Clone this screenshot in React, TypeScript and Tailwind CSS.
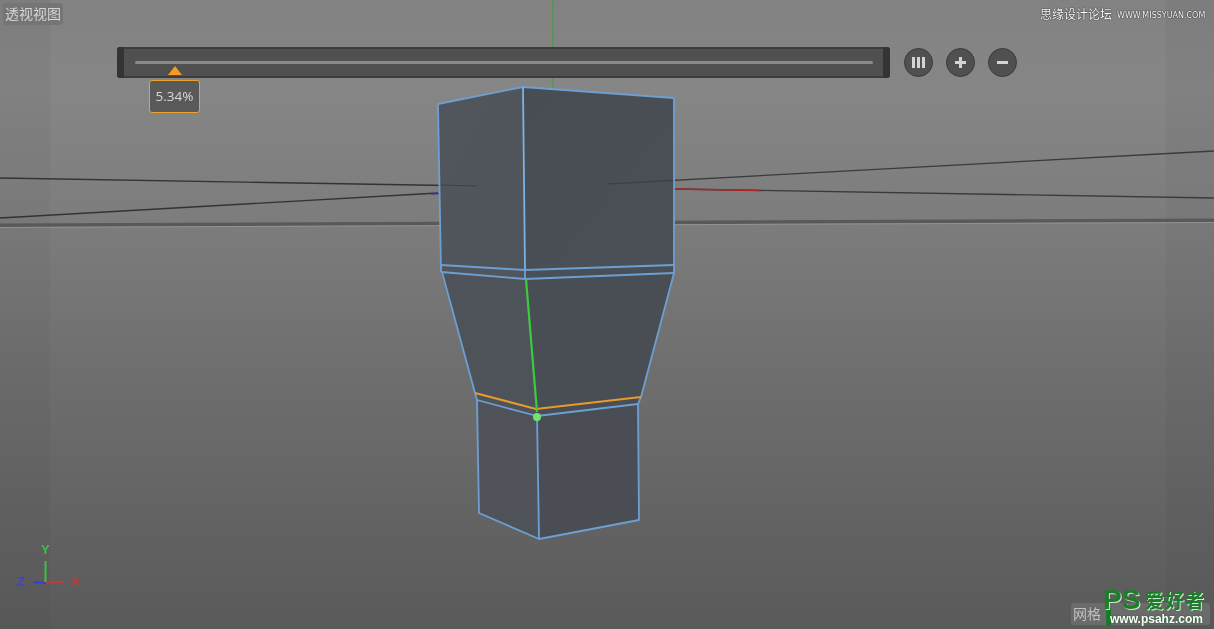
export default function App() {
  const edge = "#6d9fd2";
  return (
    <div className="relative w-[1214px] h-[629px] overflow-hidden blur-[0.5px] bg-[linear-gradient(180deg,#828282_0%,#868686_14%,#7c7c7c_36%,#6f6f6f_58%,#5a5a5a_100%)] font-['Liberation_Sans','Noto_Sans_CJK_SC',sans-serif]">
      {/* side shading */}
      <div className="absolute left-0 top-0 bottom-0 w-[50px] bg-black/[0.03]" />
      <div className="absolute right-0 top-0 bottom-0 w-[48px] bg-black/[0.03]" />

      <svg className="absolute inset-0" width="1214" height="629" viewBox="0 0 1214 629">
        <defs>
          <linearGradient id="lf" x1="0" y1="0" x2="1" y2="1">
            <stop offset="0" stopColor="#50565c" />
            <stop offset="1" stopColor="#4f555b" />
          </linearGradient>
          <linearGradient id="rf" x1="0" y1="0" x2="1" y2="1">
            <stop offset="0" stopColor="#484d54" />
            <stop offset="1" stopColor="#4b5056" />
          </linearGradient>
        </defs>
        {/* horizon */}
        <polygon points="0,223.5 1214,218.5 1214,222 0,227" fill="#595959" />
        <line x1="0" y1="227.5" x2="1214" y2="222.5" stroke="#929292" strokeWidth="1" />
        {/* grid lines */}
        <line x1="553" y1="0" x2="553" y2="88" stroke="#4f9a52" strokeWidth="1.6" />
        <line x1="0" y1="178" x2="477" y2="186" stroke="#333333" strokeWidth="1.3" />
        <line x1="0" y1="218" x2="438" y2="193" stroke="#333333" strokeWidth="1.3" />
        <line x1="431" y1="194" x2="439" y2="193.6" stroke="#3232b8" strokeWidth="1.3" />
        <line x1="607" y1="184" x2="1214" y2="151" stroke="#3a3a3a" strokeWidth="1.3" />
        <line x1="675" y1="189" x2="1214" y2="198" stroke="#3a3a3a" strokeWidth="1.3" />
        <line x1="675" y1="189" x2="760" y2="190.5" stroke="#b02424" strokeWidth="1.3" />

        {/* model faces */}
        <polygon points="438,104 523,87 525,270 441,265" fill="url(#lf)" />
        <polygon points="523,87 674,98 674,265 525,270" fill="url(#rf)" />
        <polygon points="441,265 525,270 525,279 441,272" fill="#50565c" />
        <polygon points="525,270 674,265 674,273 525,279" fill="#4a4f55" />
        <polygon points="441,272 525,279 536,409 475,393" fill="#4e5359" />
        <polygon points="525,279 674,273 641,397 536,409" fill="#494e54" />
        <polygon points="475,393 536,409 537,416 477,400" fill="#4e5359" />
        <polygon points="536,409 641,397 638,404 537,416" fill="#494e54" />
        <polygon points="477,400 537,416 539,539 479,513" fill="#4f5359" />
        <polygon points="537,416 638,404 639,520 539,539" fill="#4a4e54" />
        {/* lines seen through the model */}
        <line x1="440" y1="185" x2="477" y2="186" stroke="#3f4347" strokeWidth="1.2" />
        <line x1="607" y1="184" x2="674" y2="180.4" stroke="#3c3f43" strokeWidth="1.2" />

        {/* edges */}
        <g fill="none" stroke={edge} strokeWidth="1.8" strokeLinejoin="round">
          <polyline points="441,272 438,104 523,87 674,98 674,273" />
          <line x1="523" y1="87" x2="525" y2="270" stroke="#7ab2e6" />
          <polyline points="441,265 525,270 674,265" />
          <polyline points="441,272 525,279 674,273" />
          <line x1="525" y1="270" x2="525" y2="279" />
          <line x1="441" y1="265" x2="441" y2="272" />
          <line x1="442" y1="272" x2="475" y2="393" />
          <line x1="674" y1="273" x2="641" y2="397" />
          <polyline points="477,400 537,416 638,404" />
          <polyline points="475,393 477,400 479,513 539,539 639,520 638,404 641,397" />
          <line x1="537" y1="416" x2="539" y2="539" />
        </g>
        <polyline points="475,393 536,409 641,397" fill="none" stroke="#e89a2c" strokeWidth="2.2" />
        <line x1="526" y1="279" x2="537" y2="412" stroke="#3ccb3c" strokeWidth="2.2" />
        <circle cx="537" cy="417" r="4" fill="#6fe56f" />

        {/* axis gizmo */}
        <line x1="45.5" y1="561" x2="45.5" y2="583" stroke="#3fc045" strokeWidth="2" />
        <line x1="46" y1="582.5" x2="64" y2="582" stroke="#c03a3a" strokeWidth="2" />
        <line x1="33" y1="582" x2="46" y2="583" stroke="#3a3ae0" strokeWidth="2" />
        <text x="41" y="554" fill="#3fc045" fontSize="13" fontWeight="700" fontFamily="Liberation Sans">Y</text>
        <text x="17" y="586" fill="#3f3fe0" fontSize="13" fontWeight="700" fontFamily="Liberation Sans">Z</text>
        <text x="71" y="586" fill="#c03a3a" fontSize="13" fontWeight="700" fontFamily="Liberation Sans">X</text>
      </svg>

      {/* view label */}
      <div className="absolute left-[3px] top-[3px] h-[22px] w-[60px] rounded-[3px] bg-[#757575] text-[14px] leading-[22px] text-center text-[#d4d4d4] whitespace-nowrap">
        透视视图
      </div>

      {/* watermark top */}
      <div className="absolute left-[1040px] top-[8px] flex items-center gap-[5px] text-white whitespace-nowrap">
        <span className="text-[12px] leading-[15px] [text-shadow:0_0_1px_#111,0_0_1px_#111]">思缘设计论坛</span>
        <span className="text-[8px] leading-[15px] font-['DejaVu_Sans',sans-serif] [text-shadow:0_0_1px_#111,0_0_1px_#111]">WWW.MISSYUAN.COM</span>
      </div>

      {/* slider toolbar */}
      <div className="absolute left-[117px] top-[47px] flex items-center">
        <div className="relative flex h-[31px] w-[773px] items-center rounded-[3px] border-t-2 border-b-2 border-[#3c3c3c] bg-[#505050]">
          <div className="absolute left-0 top-[-2px] bottom-[-2px] w-[7px] rounded-l-[3px] bg-[#343434]" />
          <div className="absolute right-0 top-[-2px] bottom-[-2px] w-[7px] rounded-r-[3px] bg-[#343434]" />
          <div className="ml-[18px] h-[3px] w-[738px] rounded-full bg-[#8a8a8a]" />
          <div className="absolute left-[51px] top-[17px] h-0 w-0 border-x-[7px] border-b-[9px] border-x-transparent border-b-[#f59a23]" />
        </div>
        <div className="ml-[14px] flex gap-[13px]">
          <div className="flex h-[29px] w-[29px] items-center justify-center gap-[2px] rounded-full border border-[#3a3a3a] bg-[#505050]">
            <span className="h-[11px] w-[3px] bg-[#d4d4d4]" />
            <span className="h-[11px] w-[3px] bg-[#d4d4d4]" />
            <span className="h-[11px] w-[3px] bg-[#d4d4d4]" />
          </div>
          <div className="relative flex h-[29px] w-[29px] items-center justify-center rounded-full border border-[#3a3a3a] bg-[#505050]">
            <span className="h-[3px] w-[11px] bg-[#d4d4d4]" />
            <span className="absolute h-[11px] w-[3px] bg-[#d4d4d4]" />
          </div>
          <div className="flex h-[29px] w-[29px] items-center justify-center rounded-full border border-[#3a3a3a] bg-[#505050]">
            <span className="h-[3px] w-[11px] bg-[#d4d4d4]" />
          </div>
        </div>
      </div>

      {/* value tooltip */}
      <div className="absolute left-[149px] top-[80px] flex h-[33px] w-[51px] items-center justify-center rounded-[3px] border-[1.5px] border-[#eca32e] bg-[#595959] font-['Open_Sans',sans-serif] text-[13.5px] text-[#d8d8d8]">
        5.34%
      </div>

      {/* bottom right status + logo watermark */}
      <div className="absolute left-[1071px] top-[603px] h-[22px] w-[139px] rounded-[3px] bg-[#6b6b6b] pl-[2px] text-[14px] leading-[22px] text-[#c0c0c0] whitespace-nowrap overflow-hidden">
        网格
      </div>
      <div className="absolute left-[1106px] top-[608px] h-[18px] w-[5px] rounded-b-[2px] bg-[#1b7a28]" />
      <div className="absolute left-[1103px] top-[589px] text-[28px] leading-[22px] font-bold text-[#1b7f2a] [text-shadow:1px_1px_0_#cfe5cf]">
        PS
      </div>
      <div className="absolute left-[1145px] top-[589px] text-[19px] leading-[22px] font-bold tracking-[1px] text-[#1b7f2a] font-['Noto_Sans_CJK_SC',sans-serif] whitespace-nowrap [text-shadow:1px_1px_0_#cfe5cf]">
        爱好者
      </div>
      <div className="absolute left-[1110px] top-[612px] text-[12px] leading-[14px] font-bold text-white whitespace-nowrap [text-shadow:0_0_2px_#145a1e]">
        www.psahz.com
      </div>
    </div>
  );
}
